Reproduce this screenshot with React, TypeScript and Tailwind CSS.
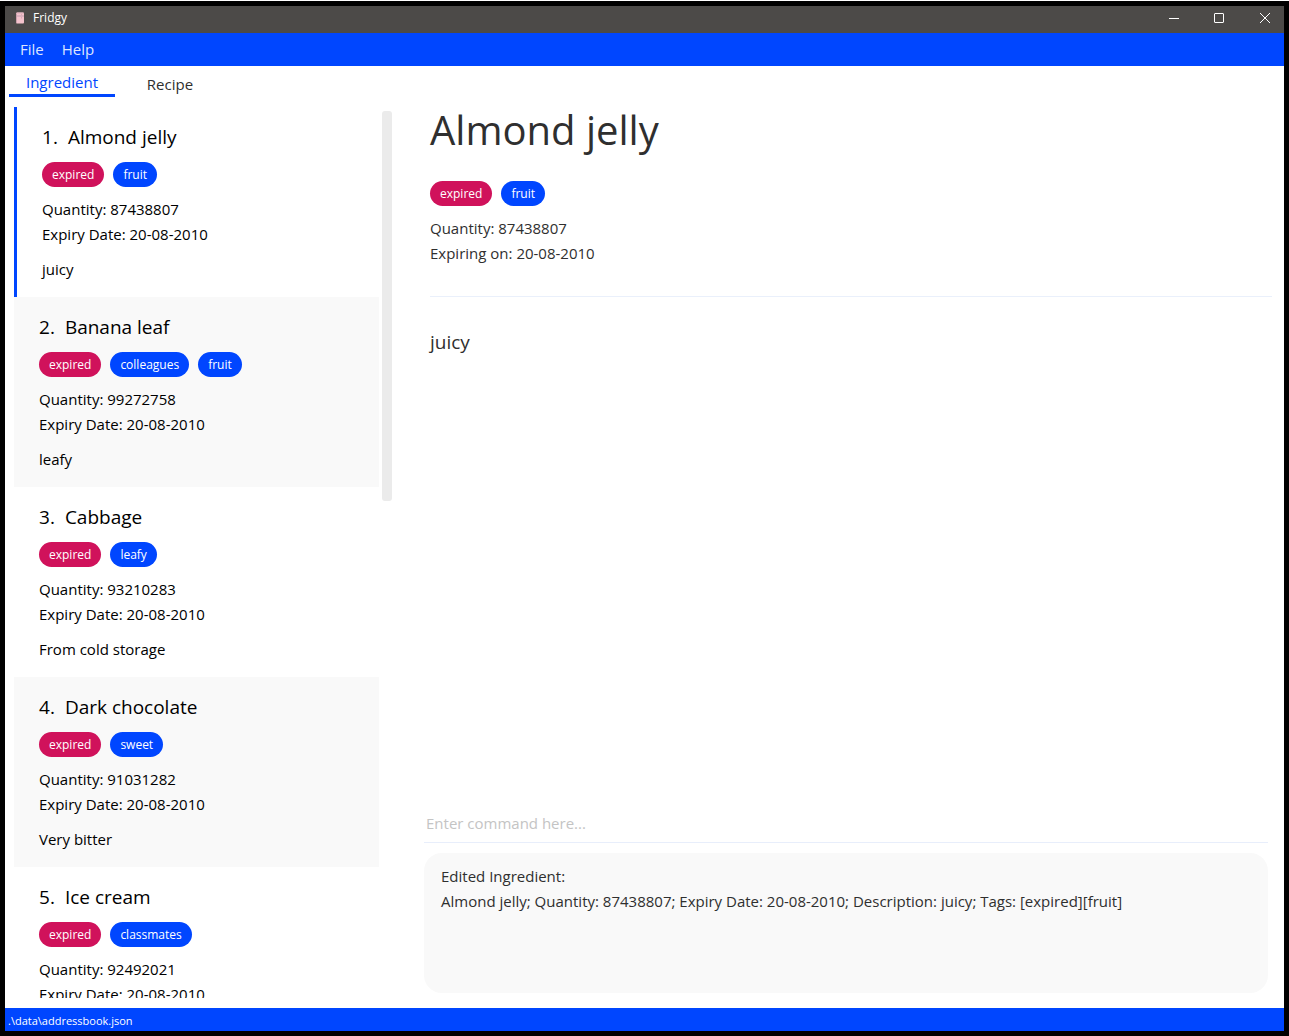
import React from "react";

type Ingredient = {
  name: string;
  tags: string[];
  quantity: string;
  expiry: string;
  description: string;
};

const ingredients: Ingredient[] = [
  { name: "Almond jelly", tags: ["expired", "fruit"], quantity: "87438807", expiry: "20-08-2010", description: "juicy" },
  { name: "Banana leaf", tags: ["expired", "colleagues", "fruit"], quantity: "99272758", expiry: "20-08-2010", description: "leafy" },
  { name: "Cabbage", tags: ["expired", "leafy"], quantity: "93210283", expiry: "20-08-2010", description: "From cold storage" },
  { name: "Dark chocolate", tags: ["expired", "sweet"], quantity: "91031282", expiry: "20-08-2010", description: "Very bitter" },
  { name: "Ice cream", tags: ["expired", "classmates"], quantity: "92492021", expiry: "20-08-2010", description: "" },
];

function Tags({ tags }: { tags: string[] }) {
  return (
    <div className="flex gap-[9px]">
      {tags.map((tag) => (
        <span
          key={tag}
          className={`flex h-[25px] items-center rounded-full px-[10px] text-[12px] text-white ${
            tag === "expired" ? "bg-[#d0125b]" : "bg-[#0046ff]"
          }`}
        >
          {tag}
        </span>
      ))}
    </div>
  );
}

function FridgeIcon() {
  return (
    <svg width="10" height="12" viewBox="0 0 10 12" aria-hidden="true">
      <rect x="1" y="0.5" width="8" height="11" rx="1" fill="#f3c2cc" />
      <path d="M1.5 1.5V11" stroke="#c9a0ab" />
      <path d="M2 1H8.5" stroke="#d9adb8" />
      <path d="M2 4H9" stroke="#c3a0b0" />
      <path d="M6.5 2V3.5M6.5 5V6.5" stroke="#dba9b5" />
    </svg>
  );
}

function TitleBar() {
  return (
    <header className="flex h-[27px] shrink-0 items-center justify-between bg-[#4c4a48] pr-[13px] pb-1 pl-[10px] text-white">
      <div className="flex items-center gap-2">
        <FridgeIcon />
        <span className="text-[12px] leading-4">Fridgy</span>
      </div>
      <div className="flex items-center gap-[34px]">
        <button type="button" aria-label="Minimize">
          <svg width="12" height="12" viewBox="0 0 12 12" className="block">
            <path d="M2 6.5H12" stroke="currentColor" fill="none" />
          </svg>
        </button>
        <button type="button" aria-label="Maximize">
          <svg width="12" height="12" viewBox="0 0 12 12" className="block">
            <rect x="1.5" y="1.5" width="9" height="9" rx="0.5" stroke="currentColor" fill="none" />
          </svg>
        </button>
        <button type="button" aria-label="Close">
          <svg width="12" height="12" viewBox="0 0 12 12" className="block">
            <path d="M1 1L11 11M11 1L1 11" stroke="currentColor" fill="none" />
          </svg>
        </button>
      </div>
    </header>
  );
}

function IngredientCard({ item, index }: { item: Ingredient; index: number }) {
  const look =
    index === 0
      ? "border-l-[3px] border-[#0046ff] bg-white"
      : index % 2 === 1
        ? "bg-[#f9f9f9]"
        : "bg-white";
  return (
    <li className={`flex flex-col gap-[10px] px-[25px] py-[15px] text-black ${look}`}>
      <h2 className="flex gap-[10px] text-[19px] leading-[30px]">
        <span>{index + 1}.</span>
        <span>{item.name}</span>
      </h2>
      <Tags tags={item.tags} />
      <div>
        <p>Quantity: {item.quantity}</p>
        <p>Expiry Date: {item.expiry}</p>
      </div>
      <p>{item.description}</p>
    </li>
  );
}

export default function App() {
  const selected = ingredients[0];
  return (
    <div className="h-screen bg-white pt-px font-['Open_Sans',sans-serif] text-[15px] leading-[25px] text-[#2f2f2f]">
      <div className="flex h-full flex-col border-[5px] border-black bg-white">
        <TitleBar />
        <nav className="flex h-[33px] shrink-0 items-center gap-[18px] bg-[#0046ff] px-[15px] text-[#dde6ff]">
          <button type="button">File</button>
          <button type="button">Help</button>
        </nav>

        <div className="flex min-h-0 flex-1">
          <aside className="flex w-[387px] shrink-0 flex-col gap-[10px] pb-[10px]">
            <div role="tablist" className="flex h-[31px] shrink-0 pl-1">
              <button
                type="button"
                role="tab"
                aria-selected="true"
                className="w-[106px] border-b-[3px] border-[#0046ff] pt-1 text-[#0046ff]"
              >
                Ingredient
              </button>
              <button type="button" role="tab" aria-selected="false" className="w-[110px] pt-[5px]">
                Recipe
              </button>
            </div>
            <div className="flex min-h-0 flex-1 gap-[3px] overflow-hidden pl-[9px]">
              <ul className="flex-1">
                {ingredients.map((item, index) => (
                  <IngredientCard key={item.name} item={item} index={index} />
                ))}
              </ul>
              <div className="w-[10px] pt-1">
                <div className="h-[390px] rounded-[3px] bg-[#ebebeb]" />
              </div>
            </div>
          </aside>

          <main className="flex min-w-0 flex-1 flex-col pr-3 pb-[15px] pl-[32px]">
            <section className="flex-1 pt-[34px] pl-[6px]">
              <h1 className="text-[40px] leading-[60px]">{selected.name}</h1>
              <div className="mt-[21px] flex flex-col gap-[10px] border-b border-[#eaf0fb] pb-[30px]">
                <Tags tags={selected.tags} />
                <div>
                  <p>Quantity: {selected.quantity}</p>
                  <p>Expiring on: {selected.expiry}</p>
                </div>
              </div>
              <p className="mt-[30px] text-[19px] leading-[30px]">{selected.description}</p>
            </section>
            <div className="mr-1 flex flex-col gap-[10px]">
              <input
                type="text"
                aria-label="Command"
                placeholder="Enter command here..."
                className="h-[38px] w-full border-b border-[#e8eefb] px-[2px] pb-[2px] outline-none placeholder:text-[#c4c4c4]"
              />
              <output className="block h-[140px] rounded-[18px] bg-[#f9f9f9] px-[17px] py-[11px]">
                <p>Edited Ingredient:</p>
                <p>
                  {selected.name}; Quantity: {selected.quantity}; Expiry Date: {selected.expiry}; Description:{" "}
                  {selected.description}; Tags: [expired][fruit]
                </p>
              </output>
            </div>
          </main>
        </div>

        <footer className="flex h-[23px] shrink-0 items-center bg-[#0046ff] px-[3px] pt-[2px] text-[11px] text-white">
          .\data\addressbook.json
        </footer>
      </div>
    </div>
  );
}
